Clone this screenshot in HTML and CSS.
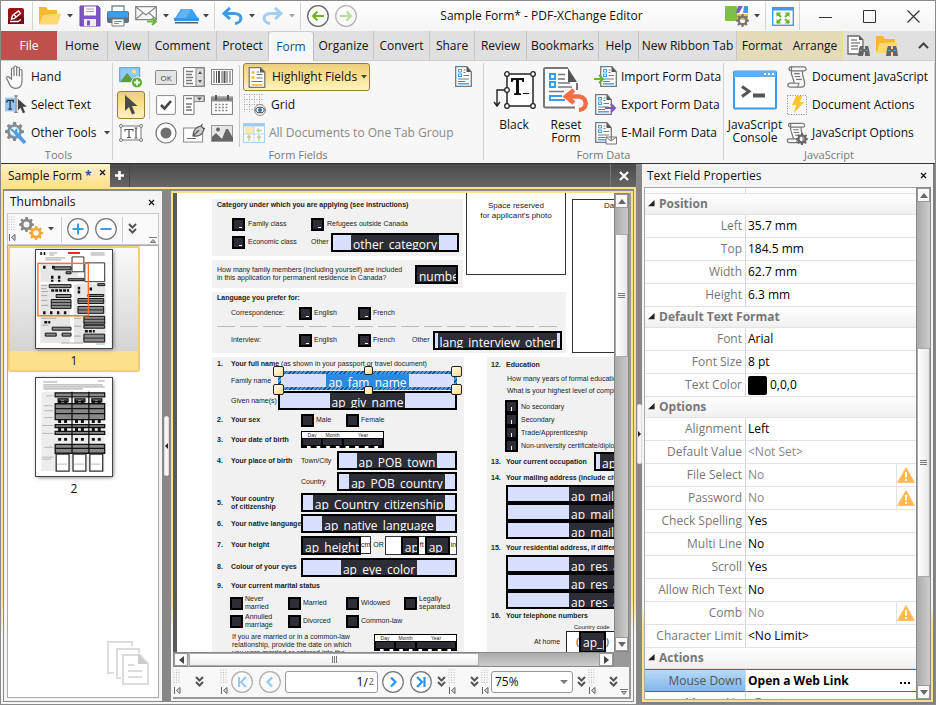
FILE: index.html
```html
<!DOCTYPE html>
<html lang="en">
<head>
<meta charset="utf-8">
<title>Sample Form* - PDF-XChange Editor</title>
<link rel="stylesheet" href="styles.css">
</head>
<body>
<svg class="sprite" aria-hidden="true">
  <symbol id="i-down" viewBox="0 0 6 4"><path d="M0 0h6L3 3.500z" fill="currentColor"/></symbol>
  <symbol id="i-chev2" viewBox="0 0 9 12"><path d="M1 1l3.500 3.500L8 1M1 6l3.500 3.500L8 6" fill="none" stroke="#555" stroke-width="2"/></symbol>
  <symbol id="i-grip" viewBox="0 0 8 26"><path d="M1 .5v15M3.500 .5v15M6 .5v15" stroke="#bbb" stroke-dasharray="1 1.500" fill="none"/><path d="M1.500 18v7M7 18.500v6L3.500 21.500z" stroke="#666" fill="#ddd" stroke-width="1"/></symbol>
  <symbol id="i-x" viewBox="0 0 7 7"><path d="M1 1l5 5M6 1l-5 5" stroke="currentColor" stroke-width="1.200"/></symbol>
  <symbol id="i-gear" viewBox="0 0 20 20"><path d="M10 0l1.700.1.500 2.700 1.900.8L16.500 2.200l1.900 2-1.500 2.300.7 1.800 2.400.7v2.400l-2.600.8-.8 1.800 1.400 2.300-1.900 1.900-2.300-1.500-1.800.7L11.400 20H8.600L8 17.400l-1.800-.7-2.400 1.500-1.900-1.900 1.500-2.400-.8-1.800L0 11.400V8.800l2.600-.7.800-1.800L1.900 4l1.900-1.900 2.400 1.400L8 2.800 8.500 0zM10 6a4 4 0 100 8 4 4 0 000-8z" fill="currentColor" fill-rule="evenodd"/></symbol>
  <symbol id="i-page" viewBox="0 0 17 21"><path d="M.7.7H12L16.300 6v14.300H.7z" fill="#fff" stroke="#777" stroke-width="1.300"/><path d="M11.500.7v5.300h4.800z" fill="#555"/><rect x="3.500" y="3.500" width="3" height="2.500" fill="none" stroke="#3f9fee"/><rect x="3.500" y="8" width="3" height="2.500" fill="none" stroke="#3f9fee"/><path d="M8.500 4h2M8.500 6.500h2M8.500 9.500H14M3 13h11M3 15.500h7" stroke="#777"/><path d="M3 17.800h11" stroke="#3f9fee" stroke-width="1.400"/></symbol>
  <symbol id="i-scroll" viewBox="0 0 22 23"><path d="M4.500 1H18c3 0 3.500 4 .5 4H17c-1.500 4 2 9 2 13 0 3-1.500 4-3 4H4c-3.500 0-3.500-4 0-4h4c0-4-3.500-8-3-13C5 2.500 6 1 4.500 1 2 1 2 5 5 5h12" fill="#f7f7f7" stroke="#777" stroke-width="1.300"/><path d="M8 8h6M8.500 11h6M10 14h6M8 18h5c0 2-1 3-2 4" stroke="#777" fill="none" stroke-width="1.200"/></symbol>
  <symbol id="i-warn" viewBox="0 0 18 16"><path d="M9 .5L17.500 15.500H.5z" fill="#ffb84d" stroke="#ffc46b" stroke-linejoin="round"/><path d="M9 5v5.500M9 12v2" stroke="#fff" stroke-width="2"/></symbol>
  <symbol id="i-bino" viewBox="0 0 12 12"><path d="M1 4l1-3h3v3h2V1h3l1 3 1 7H7V7H5v4H0z" fill="#666"/><path d="M2 5.500h2.500M7.500 5.500H10" stroke="#5a9fd8"/></symbol>
  <symbol id="i-open" viewBox="0 0 8 8"><path d="M7.500 0v7H0z" fill="#222"/></symbol>
</svg>

<div class="app">
  <header class="titlebar">
    <div class="brand"><svg width="16" height="16" viewBox="0 0 16 16"><rect width="16" height="16" rx="2" fill="#9c1018"/><path d="M0 13Q9 3 16 10v6H0z" fill="#700a10"/><path d="M3.500 11l1-3.500 6-4.500 2 2.500-6 4.800zM6 6.500l2 2.500M2 13.500h8l3-2" fill="none" stroke="#fff" stroke-width="1.300"/></svg></div>
    <i class="sep"></i>
    <button class="tb" aria-label="Open"><svg width="24" height="20" viewBox="0 0 24 20"><path d="M1 18V1h7l2 3h9v14z" fill="#f6b733"/><path d="M1 18.500L5 9l18-1.500-3 11z" fill="#ffd773"/></svg></button>
    <button class="dd" aria-label="Open menu"><svg><use href="#i-down"/></svg></button>
    <button class="tb" aria-label="Save"><svg width="22" height="22" viewBox="0 0 22 22"><path d="M1 1h18l2 2v18H1z" fill="#7e57c2" stroke="#6b46ad"/><rect x="5" y="1.500" width="12" height="9" fill="#fff"/><path d="M7 4h8M7 6.500h8" stroke="#a9a"/><rect x="5" y="14" width="12" height="7" fill="#eee"/><rect x="8" y="15.500" width="3" height="5" fill="#7e57c2"/></svg></button>
    <button class="tb" aria-label="Print"><svg width="22" height="22" viewBox="0 0 22 22"><path d="M5 7V1h12v6" fill="#fff" stroke="#888" stroke-width="1.400"/><rect x="0" y="6" width="22" height="12" rx="2" fill="#607080"/><rect x="1" y="6.500" width="20" height="6" fill="#3aa0f0"/><path d="M5 14h12v7H5z" fill="#fff" stroke="#777"/><path d="M7 16.500h8M7 18.500h5" stroke="#3aa0f0"/></svg></button>
    <button class="tb" aria-label="Mail"><svg width="22" height="20" viewBox="0 0 22 20"><path d="M.7.700h20.600v13H.7z" fill="#fafafa" stroke="#888" stroke-width="1.300"/><path d="M1 1l10 8L21 1M1 13l7-6M21 13l-7-6" fill="none" stroke="#888" stroke-width="1.200"/><path d="M12 15.500h8M17 12l4 3.500-4 3.500" fill="none" stroke="#70b33d" stroke-width="2.200"/></svg></button>
    <button class="dd" aria-label="Mail menu"><svg><use href="#i-down"/></svg></button>
    <button class="tb" aria-label="Scan"><svg width="25" height="16" viewBox="0 0 25 16"><path d="M7 1h11l6 9H1z" fill="#3fa0f0"/><path d="M9 1h8l-5 9H2z" fill="#61b4f8"/><path d="M0 10h25v3H0z" fill="#3a95e6"/><path d="M1 14h23v1.500H1z" fill="#555e66"/></svg></button>
    <button class="dd" aria-label="Scan menu"><svg><use href="#i-down"/></svg></button>
    <i class="sep"></i>
    <button class="tb" aria-label="Undo"><svg width="21" height="18" viewBox="0 0 21 18"><path d="M8 1L2 6.500l6 5.500M3 6.500h9c10 0 8 9.500 1 10" fill="none" stroke="#3d9be9" stroke-width="3"/></svg></button>
    <button class="dd" aria-label="Undo menu"><svg><use href="#i-down"/></svg></button>
    <button class="tb faded" aria-label="Redo"><svg width="21" height="18" viewBox="0 0 21 18"><path d="M13 1l6 5.500-6 5.500M18 6.500H9c-10 0-8 9.500-1 10" fill="none" stroke="#3d9be9" stroke-width="3"/></svg></button>
    <button class="dd faded" aria-label="Redo menu"><svg><use href="#i-down"/></svg></button>
    <i class="sep"></i>
    <button class="tb" aria-label="Previous view"><svg width="22" height="22" viewBox="0 0 22 22"><circle cx="11" cy="11" r="10.300" fill="#fff" stroke="#666" stroke-width="1.300"/><path d="M17 11H7M10.500 6.500L6 11l4.500 4.500" fill="none" stroke="#6bb52c" stroke-width="2"/></svg></button>
    <button class="tb faded" aria-label="Next view"><svg width="22" height="22" viewBox="0 0 22 22"><circle cx="11" cy="11" r="10.300" fill="#fff" stroke="#666" stroke-width="1.300"/><path d="M5 11h10M11.500 6.500L16 11l-4.500 4.500" fill="none" stroke="#6bb52c" stroke-width="2"/></svg></button>
    <h1 class="title">Sample Form* - PDF-XChange Editor</h1>
    <button class="tb" aria-label="UI options"><svg width="25" height="21" viewBox="0 0 25 21"><rect x="0" y="0" width="12" height="15" rx="1" fill="#7cc04a"/><path d="M13 0h5l-4 7h-3z" fill="#7e57c2"/><path d="M19 0h4v7h-5z" fill="#3d9be9"/><path d="M12 8h11v6H12z" fill="#f7c35a"/><svg x="11" y="8" width="13" height="13" color="#777"><use href="#i-gear"/></svg></svg></button>
    <button class="dd" aria-label="UI options menu"><svg><use href="#i-down"/></svg></button>
    <i class="sep"></i>
    <button class="tb" aria-label="Full screen"><svg width="22" height="19" viewBox="0 0 22 19"><rect x=".7" y=".7" width="20.600" height="17.600" fill="#fff" stroke="#3d9be9" stroke-width="1.400"/><path d="M1 2h20" stroke="#3d9be9" stroke-width="3"/><path d="M4.500 5.500h5l-5 4.500zM17.500 5.500h-5l5 4.500zM4.500 16.500h5l-5-4.500zM17.500 16.500h-5l5-4.500z" fill="#6bb52c"/><path d="M5 6l4 4M17 6l-4 4M5 16l4-4M17 16l-4-4" stroke="#6bb52c" stroke-width="2"/></svg></button>
    <i class="sep"></i>
    <button class="win" aria-label="Minimize"><svg width="13" height="13"><path d="M0 7.500h13" stroke="#333"/></svg></button>
    <button class="win" aria-label="Maximize"><svg width="13" height="13"><path d="M.5.500h12v12H.5z" fill="none" stroke="#333"/></svg></button>
    <button class="win" aria-label="Close"><svg width="13" height="13"><path d="M.5.500l12 12M12.500.500l-12 12" stroke="#333" stroke-width="1.200"/></svg></button>
  </header>

  <nav class="tabs">
    <button class="file">File</button>
    <button>Home</button>
    <button>View</button>
    <button>Comment</button>
    <button>Protect</button>
    <button class="current">Form</button>
    <button>Organize</button>
    <button>Convert</button>
    <button>Share</button>
    <button>Review</button>
    <button>Bookmarks</button>
    <button>Help</button>
    <button>New Ribbon Tab</button>
    <button class="context">Format</button>
    <button class="context">Arrange</button>
    <span class="tabtools">
      <button aria-label="Find"><svg width="24" height="24" viewBox="0 0 24 24"><path d="M1 2h11l4 4v14H1z" fill="#fff" stroke="#666" stroke-width="1.300"/><path d="M12 2v4h4z" fill="#555"/><path d="M4 6h6M4 9h9M4 12h7M4 15h7" stroke="#888" stroke-width="1.300"/><svg x="11" y="11" width="12" height="12"><use href="#i-bino"/></svg></svg></button>
      <button aria-label="Search"><svg width="24" height="24" viewBox="0 0 24 24"><path d="M1 18V2h7l2 3h10v13z" fill="#f6b733"/><path d="M1 19l4-10 18-1-3 11z" fill="#ffd773"/><svg x="11" y="11" width="12" height="12"><use href="#i-bino"/></svg></svg></button>
      <button class="fold" aria-label="Collapse ribbon"><svg width="11" height="7"><path d="M1 6l4.500-4.500L10 6" fill="none" stroke="#444" stroke-width="2"/></svg></button>
    </span>
  </nav>

  <div class="ribbon">
    <section class="group g-tools">
      <div class="cmds">
        <button class="cmd"><svg width="20" height="24" viewBox="0 0 20 24"><path d="M5.500 14V4.500c0-2 2.500-2 2.500 0V11 2.500c0-2 2.700-2 2.700 0V11 3.500c0-2 2.700-2 2.700 0V11.500 6c0-2 2.600-2 2.600 0v10c0 5-2.500 7.300-6.500 7.300-4 0-5.500-2.300-6.500-5L.8 13.500c-.5-2 1.700-2.500 2.500-1z" fill="#fff" stroke="#777" stroke-width="1.200"/></svg>Hand</button>
        <button class="cmd"><svg width="22" height="20" viewBox="0 0 24 22"><rect x="0" y="3" width="11" height="15" fill="#8fc6f5"/><path d="M2 6h7v2.500M5.500 6v9.500M3.500 15.500h4M2 6v2.500" stroke="#333" stroke-width="1.400" fill="none"/><path d="M10 1h4M12 1v18M10 19h4" stroke="#555"/><path d="M14 4v13l3-3 2.500 6 2.500-1-2.500-6H24z" fill="#444"/></svg>Select Text</button>
        <button class="cmd"><svg width="22" height="23" viewBox="0 0 22 23"><svg width="19" height="19" color="#888"><use href="#i-gear"/></svg><circle cx="9.500" cy="9.500" r="5" fill="#eef6fd" stroke="#5aa9ea"/><path d="M10 10l10 11" stroke="#4a9de6" stroke-width="3.500"/><path d="M6 7l4 3.500L12 7" fill="none" stroke="#4a9de6" stroke-width="2"/></svg>Other Tools<svg class="arr"><use href="#i-down"/></svg></button>
      </div>
      <h2>Tools</h2>
    </section>

    <section class="group g-fields">
      <div class="cmds fields">
        <div class="iconcol">
          <button aria-label="Image"><svg width="24" height="24" viewBox="0 0 24 24"><rect x=".7" y="2.700" width="20" height="14" fill="#8ecbf7" stroke="#5f9dc8"/><path d="M1 17L8 8l5 6 3-3 5 6z" fill="#5e9c3f"/><circle cx="15" cy="6.500" r="2" fill="#ffe27a"/><circle cx="18" cy="17.500" r="5.500" fill="#5cb030" stroke="#fff"/><path d="M18 14.500v6M15 17.500h6" stroke="#fff" stroke-width="1.800"/></svg></button>
          <button class="on" aria-label="Edit Form"><svg width="14" height="20" viewBox="0 0 14 20"><path d="M1 0v16l4-4 3 7.500 3-1.200-3-7.300h5.500z" fill="#4a4a4a"/></svg></button>
          <button aria-label="Text Field"><svg width="24" height="18" viewBox="0 0 24 18"><rect x="2" y="2" width="20" height="14" fill="#fff" stroke="#777"/><path d="M6 5.500h8M6 5v2.500M14 5v2.500M10 5v8.500M8 13.500h4M17 4v10M15.500 4h3M15.500 14h3" stroke="#555" fill="none" stroke-width="1.200"/><g fill="#fff" stroke="#777"><circle cx="2" cy="2" r="1.500"/><circle cx="22" cy="2" r="1.500"/><circle cx="2" cy="16" r="1.500"/><circle cx="22" cy="16" r="1.500"/></g></svg></button>
        </div>
        <i class="vline short"></i>
        <div class="icongrid">
          <button aria-label="Button"><svg width="22" height="15" viewBox="0 0 22 15"><rect x=".5" y=".5" width="21" height="14" rx="1" fill="#e4e4e4" stroke="#888"/><text x="11" y="11" class="oktext">OK</text></svg></button>
          <button aria-label="List Box"><svg width="22" height="20" viewBox="0 0 22 20"><rect x=".6" y=".6" width="20.800" height="18.800" fill="#fff" stroke="#777"/><path d="M13 1h8v18h-8z" fill="#ddd" stroke="#888"/><path d="M3 4.500h7M3 7.500h6M3 10.500h7M3 13.500h6M3 16.500h7" stroke="#777" stroke-width="1.400"/><path d="M15 7l2-3 2 3zM15 13l2 3 2-3z" fill="#555"/></svg></button>
          <button aria-label="Barcode"><svg width="22" height="16" viewBox="0 0 22 16"><rect x=".5" y=".5" width="21" height="15" fill="#fff" stroke="#888"/><path d="M3 2v12M5.500 2v12M11 2v12M16 2v12M19 2v12" stroke="#555"/><path d="M8 2v12M13.500 2v12" stroke="#555" stroke-width="2"/></svg></button>
          <button aria-label="Check Box"><svg width="20" height="20" viewBox="0 0 20 20"><rect x=".6" y=".6" width="18.800" height="18.800" rx="1" fill="#fff" stroke="#888"/><path d="M5 10l3.500 3.500L15 6" fill="none" stroke="#444" stroke-width="2.600"/></svg></button>
          <button aria-label="Dropdown"><svg width="22" height="20" viewBox="0 0 22 20"><path d="M.6.600h20.800v6H11v12.800H.6z" fill="#fff" stroke="#777"/><path d="M11 1h10v5.500H11z" fill="#ddd" stroke="#888"/><path d="M3 3.500h6M3 9h6M3 12h5M3 15h6" stroke="#777" stroke-width="1.300"/><path d="M14 2.500h5l-2.500 3z" fill="#555"/></svg></button>
          <button aria-label="Date"><svg width="22" height="20" viewBox="0 0 22 20"><rect x=".6" y="2" width="20.800" height="17.400" fill="#fff" stroke="#777"/><path d="M1 4.500h20" stroke="#888" stroke-width="4"/><path d="M5 0v5M17 0v5" stroke="#555" stroke-width="2"/><path d="M4 9.500h14M4 12.500h14M4 15.500h14" stroke="#888" stroke-width="1.600" stroke-dasharray="2 1.500"/></svg></button>
          <button aria-label="Radio Button"><svg width="22" height="22" viewBox="0 0 22 22"><circle cx="11" cy="11" r="10" fill="#fff" stroke="#777" stroke-width="1.200"/><circle cx="11" cy="11" r="5.500" fill="#707070"/></svg></button>
          <button aria-label="Signature"><svg width="22" height="20" viewBox="0 0 22 20"><rect x=".6" y="5" width="19" height="14" fill="#fff" stroke="#888"/><path d="M4 15.500h9" stroke="#666"/><path d="M10 13c0-6 3-9 8-10l3 3c-1 5-4 8-11 7zM10 13l6-6M18 3l1.500-2M21 6l1-1" fill="#ccc" stroke="#555" stroke-width="1.200"/></svg></button>
          <button aria-label="Image Field"><svg width="22" height="17" viewBox="0 0 22 17"><rect x=".5" y=".5" width="21" height="16" fill="#e6e6e6" stroke="#999"/><path d="M1 16V12l4-4 6 6 4-10h2l5 9v3z" fill="#666"/><circle cx="7" cy="4.500" r="2" fill="#666"/></svg></button>
        </div>
        <i class="vline"></i>
        <div class="cmdcol">
          <button class="cmd hot"><svg width="17" height="21" viewBox="0 0 17 21"><path d="M.7.700H12L16.300 5v15.300H.7z" fill="#fff" stroke="#777" stroke-width="1.300"/><path d="M11.500.7V5.500h4.800z" fill="#555"/><path d="M3 4h3v3H3zM3 9h3v3H3zM3 17h11v2H3z" fill="#ffc845"/><path d="M8 5h2.500M8 7.500h6M8 11h6M3 14.500h11" stroke="#777"/></svg>Highlight Fields<svg class="arr"><use href="#i-down"/></svg></button>
          <button class="cmd"><svg width="24" height="24" viewBox="0 0 24 24"><path d="M1 1.500h19M1 6.500h19M1 11.500h19M1 16.500h10M1.500 1v18M6.500 1v18M11.500 1v12M16.500 1v10" stroke="#999" stroke-dasharray="1 1.500"/><circle cx="17" cy="17" r="5.500" fill="#fff" stroke="#888"/><ellipse cx="17" cy="17" rx="4.200" ry="2.800" fill="#fff" stroke="#333"/><circle cx="17" cy="17" r="2" fill="#2a75b5"/></svg>Grid</button>
          <button class="cmd off" disabled><svg width="22" height="20" viewBox="0 0 22 20"><rect x=".6" y=".6" width="20.800" height="18.800" fill="#fff" stroke="#9fcdf2"/><path d="M1 2h20" stroke="#9fcdf2" stroke-width="3"/><rect x="2" y="4" width="9" height="7" fill="#ffe9ae"/><path d="M11 4v15M1 11h20" stroke="#b6d8f0"/><path d="M14 7.500h5M16 5.500l-2 2 2 2M6 18v-5M4 14.500l2-2 2 2M16 18v-5M14 14.500l2-2 2 2" stroke="#b7d99c" fill="none" stroke-width="1.500"/></svg>All Documents to One Tab Group</button>
        </div>
        <button class="lonely" aria-label="Field list"><svg width="17" height="21"><use href="#i-page"/></svg></button>
      </div>
      <h2>Form Fields</h2>
    </section>

    <section class="group g-data">
      <div class="cmds row">
        <button class="big"><svg width="43" height="40" viewBox="0 0 43 40"><path d="M12 20H4v16M1 32l3 4 3-4" fill="none" stroke="#222" stroke-width="1.400"/><rect x="14" y="4" width="26" height="32" fill="#fff" stroke="#222" stroke-width="1.500"/><path d="M18 8h13v4h-1.500l-1-2H26v13l2 .5V25h-7v-1.500l2-.5V10h-2.500l-1 2H18z" fill="#111"/><path d="M30 23.500h6" stroke="#111"/><g fill="#fff" stroke="#222" stroke-width="1.300"><circle cx="14" cy="4" r="2.300"/><circle cx="40" cy="4" r="2.300"/><circle cx="14" cy="20" r="2.300"/><circle cx="14" cy="36" r="2.300"/><circle cx="40" cy="36" r="2.300"/></g></svg><span>Black</span></button>
        <button class="big"><svg width="46" height="46" viewBox="0 0 46 46"><path d="M2 1h24l9 14v26H2z" fill="#fff"/><path d="M32 40.500H2.500a1.500 1.500 0 01-1.500-1.500V2.500A1.500 1.500 0 012.500 1H25M34 16v7" fill="none" stroke="#777" stroke-width="2"/><path d="M25 1v14h9z" fill="#555"/><path d="M7 7h5v5H7zM7 15h5v5H7zM22 33H7v-4h12" fill="none" stroke="#3d9be9" stroke-width="2"/><path d="M15 7.500h7M15 12h7M15 16h12M15 20h14M6 24.500h15" stroke="#777" stroke-width="1.700"/><path d="M31 23l-8 6.500 8 6.500M24 29.500h12c9 1 9 13 0 13.500" fill="none" stroke="#f86d43" stroke-width="4.500"/></svg><span>Reset<br>Form</span></button>
        <div class="cmdcol">
          <button class="cmd"><svg width="23" height="22" viewBox="0 0 23 22"><svg x="6" y="0" width="17" height="21"><use href="#i-page"/></svg><path d="M0 13h8M5 9l4 4-4 4" fill="none" stroke="#6bb52c" stroke-width="2"/></svg>Import Form Data</button>
          <button class="cmd"><svg width="23" height="22" viewBox="0 0 23 22"><svg x="1" y="0" width="17" height="21"><use href="#i-page"/></svg><path d="M11 14h9M17 10l4 4-4 4" fill="none" stroke="#7e57c2" stroke-width="2"/></svg>Export Form Data</button>
          <button class="cmd"><svg width="23" height="23" viewBox="0 0 23 23"><svg x="1" y="0" width="17" height="21"><use href="#i-page"/></svg><path d="M12 15h10.500v7H12zM12 15l5 4 5.500-4" fill="#fff" stroke="#777"/></svg>E-Mail Form Data</button>
        </div>
      </div>
      <h2>Form Data</h2>
    </section>

    <section class="group g-js">
      <div class="cmds row">
        <button class="big console"><svg width="44" height="39" viewBox="0 0 44 39"><rect x="1" y="1" width="42" height="37" rx="1" fill="#fff" stroke="#3d9be9" stroke-width="2"/><path d="M1 3.500h42" stroke="#62b0f2" stroke-width="6"/><path d="M31 3.500h10" stroke="#fff" stroke-width="2" stroke-dasharray="2 2"/><path d="M9 16l7 5-7 5" fill="none" stroke="#555" stroke-width="3"/><path d="M20 25h12" stroke="#555" stroke-width="4"/></svg><span>JavaScript<br>Console</span></button>
        <div class="cmdcol">
          <button class="cmd"><svg width="20" height="22"><use href="#i-scroll"/></svg>Document JavaScript</button>
          <button class="cmd"><svg width="20" height="22" viewBox="0 0 20 22"><path d="M.5 1.500h19v19H.5z" fill="none" stroke="#888" stroke-dasharray="1 1.500"/><path d="M9 2h6l-2 6h4L7 19l2-8H5z" fill="#ffc42e"/></svg>Document Actions</button>
          <button class="cmd"><svg width="22" height="23" viewBox="0 0 22 23"><svg width="20" height="22"><use href="#i-scroll"/></svg><svg x="10" y="11" width="12" height="12" color="#666"><use href="#i-gear"/></svg></svg>JavaScript Options</button>
        </div>
      </div>
      <h2>JavaScript</h2>
    </section>
  </div>

  <main class="desk">
    <div class="left">
      <div class="doctabs">
        <button class="doctab">Sample Form <b>*</b><svg width="7" height="7"><use href="#i-x"/></svg></button>
        <button class="plus" aria-label="New document"><svg width="9" height="9"><path d="M4.500 0v9M0 4.500h9" stroke="#fff" stroke-width="2.600"/></svg></button>
        <button class="shut" aria-label="Close all"><svg width="10" height="10"><path d="M1 1l8 8M9 1l-8 8" stroke="#fff" stroke-width="2.200"/></svg></button>
      </div>
      <div class="frame">
        <aside class="thumbs">
          <header><h2>Thumbnails</h2><button aria-label="Close pane"><svg width="7" height="7"><use href="#i-x"/></svg></button></header>
          <div class="thumbbar">
            <svg class="grip"><use href="#i-grip"/></svg>
            <button aria-label="Options"><svg width="24" height="24" viewBox="0 0 24 24"><svg width="15" height="15" color="#888"><use href="#i-gear"/></svg><svg x="10" y="9" width="14" height="14" color="#f5a938"><use href="#i-gear"/></svg></svg></button>
            <svg class="arr"><use href="#i-down"/></svg>
            <i></i>
            <button aria-label="Zoom in"><svg width="22" height="22" viewBox="0 0 22 22"><circle cx="11" cy="11" r="10.300" fill="#fff" stroke="#777" stroke-width="1.200"/><path d="M11 5.500v11M5.500 11h11" stroke="#3d9be9" stroke-width="2"/></svg></button>
            <button aria-label="Zoom out"><svg width="22" height="22" viewBox="0 0 22 22"><circle cx="11" cy="11" r="10.300" fill="#fff" stroke="#777" stroke-width="1.200"/><path d="M5.500 11h11" stroke="#3d9be9" stroke-width="2"/></svg></button>
            <i></i>
            <button class="more" aria-label="More"><svg width="9" height="12"><use href="#i-chev2"/></svg></button>
            <svg class="endmark" width="8" height="6"><path d="M0 .5h8M1.500 5.500L4 2.500l2.500 3z" stroke="#777" fill="#bbb"/></svg>
          </div>
          <div class="thumblist">
            <figure class="picked">
              <svg width="76" height="98" viewBox="0 0 76 99"><rect width="76" height="99" fill="#fff"/>
                <path d="M4 14h38v13H4zM4 27h66v5H4zM4 34h30v60H4zM38 34h32v60H38z" fill="#e6e6e6"/>
                <path d="M4 4h5M13 3h8M13 5h5M55 3h14M55 5h14M9 8h20M9 10h16" stroke="#888" stroke-width=".8"/>
                <path d="M4 2h1.500v3H4zM7.500 2H9v3H7.500z" fill="#111"/><path d="M32 2h12v2H32z" fill="#e22"/>
                <path d="M36 7h12v15H36zM49 13h20v19H49z" fill="#fff" stroke="#333"/>
                <path d="M18 17h17v3H18zM30 22h5v2h-5zM32 29h16v2H32zM13 35h22v3H13zM20 45h15v3H20zM15 50h20v9H15zM42 49h26v5H42zM42 57h26v7H42zM52 45h16v2H52zM48 67h21v8H48zM48 76h21v3H48zM48 85h21v8H48zM16 78h19v3H16zM9 84h11v3H9zM26 84h9v3h-9zM62 34h7v2h-7z" fill="#8c8c8c" stroke="#111" stroke-width="1"/>
                <path d="M15 53h20M15 56h20M42 51.500h26M42 60.500h26M48 70h21M48 73h21M48 89h21" stroke="#111" stroke-width=".8"/>
                <path d="M8 16v3M17 16v3M16 26v6M23 26v6M15 41h18M43 37v8M55 38v4M8 62v3M15 62v3M22 62v3M29 62v3M8 73h6M49 82h10" stroke="#111" stroke-width="2.500" stroke-dasharray="3 1"/>
                <path d="M5 36h6M5 39h5M5 42h7M5 46h6M5 51h6M5 56h7M5 69h15M5 76h7M38 69h7M38 77h7M38 87h7M25 94h22M60 95h9" stroke="#999" stroke-width=".8"/>
                <rect x="1.500" y="13.500" width="51" height="53" fill="none" stroke="#ff6f2c" stroke-width="1.400"/></svg>
              <figcaption>1</figcaption>
            </figure>
            <figure>
              <svg width="76" height="98" viewBox="0 0 76 99"><rect width="76" height="99" fill="#fff"/>
                <path d="M5 14h64v80H5z" fill="#ededed"/>
                <path d="M7 4h14M62 3h7M7 7h60M7 9h62M7 11h40" stroke="#888" stroke-width=".8"/>
                <path d="M19 15h50v4H19zM19 26h50v16H19zM19 47h50v3H19zM19 54h50v3H19zM19 67h50v9H19zM22 21h10v3H22zM39 21h10v3H39zM56 21h10v3H56z" fill="#888" stroke="#111" stroke-width="1.300"/>
                <path d="M19 31h50M19 36h50M19 71h50M36 14v62M53 14v62" stroke="#111" stroke-width="1.300"/>
                <path d="M22 44h46M22 52h46M22 62h46M22 24h46" stroke="#111" stroke-width="3" stroke-dasharray="3 3 3 8"/>
                <path d="M20 77h13v17H20zM37 77h13v17H37zM54 77h13v17H54z" fill="#fff" stroke="#333" stroke-width="1.300"/>
                <path d="M10 18h7M8 28h9M8 33h9M8 40h9M6 48h11M6 56h11M8 70h9M6 80h11M6 82h9M21 87h10M38 87h10M55 87h10" stroke="#aaa" stroke-width=".8"/></svg>
              <figcaption>2</figcaption>
            </figure>
            <svg class="watermark" width="44" height="46" viewBox="0 0 44 46"><g fill="#fff" stroke="#dcdcdc" stroke-width="2"><path d="M8 32H2V1h24v4M15 37h-4V8h22v4"/><path d="M17 14h17l8 9v20H17z"/></g><path d="M32 13v10h10z" fill="#ccc"/><path d="M22 24h6M22 30h14M22 36h14" stroke="#dcdcdc" stroke-width="2"/></svg>
          </div>
        </aside>
        <div class="splitter"><b class="back"></b></div>

        <section class="docs">
          <div class="viewport">
            <div class="sheet">
              <div class="upper">
                <div class="upmain">
                  <div class="card cat">
                    <h3>Category under which you are applying (see instructions)</h3>
                    <div class="line opts1"><i class="chk"></i><span>Family class</span><i class="chk"></i><span>Refugees outside Canada</span></div>
                    <div class="line opts1"><i class="chk"></i><span>Economic class</span><span class="oth">Other</span><div class="field grow"><span>other_category</span></div></div>
                  </div>
                  <div class="card fam"><p>How many family members (including yourself) are included<br>in this application for permanent residence in Canada?</p><div class="field full num"><span>number</span></div></div>
                  <div class="photo">Space reserved<br>for applicant's photo</div>
                  <div class="card lang">
                    <h3>Language you prefer for:</h3>
                    <div class="line opts2"><span>Correspondence:</span><i class="chk"></i><span>English</span><i class="chk"></i><span>French</span></div>
                    <div class="dash"></div>
                    <div class="line opts2"><span>Interview:</span><i class="chk"></i><span>English</span><i class="chk"></i><span>French</span><span>Other</span><div class="field grow"><span>lang_interview_other</span></div></div>
                  </div>
                </div>
                <div class="official">Date</div>
              </div>

              <div class="lower">
                <div class="card person">
                  <div class="q first"><b>1.</b><span><b>Your full name</b> (as shown in your passport or travel document)</span></div>
                  <div class="q family"><i></i><span class="w47">Family name</span>
                    <div class="picked-field"><div class="field blue"><span>ap_fam_name</span></div><i class="knob tl"></i><i class="knob tr"></i><i class="knob bl"></i><i class="knob br"></i><i class="knob tm"></i><i class="knob bm"></i></div></div>
                  <div class="q"><i></i><span class="w47">Given name(s)</span><div class="field grow"><span>ap_giv_name</span></div></div>
                  <div class="q sex"><b>2.</b><b class="w70">Your sex</b><i class="chk"></i><span class="w30">Male</span><i class="chk"></i><span>Female</span></div>
                  <div class="q"><b>3.</b><b class="w70">Your date of birth</b><div class="date"><span>Day</span><span>Month</span><span>Year</span><i></i><i></i><i></i></div></div>
                  <div class="q"><b>4.</b><b class="w70">Your place of birth</b><span class="w36">Town/City</span><div class="field grow"><span>ap_POB_town</span></div></div>
                  <div class="q"><i></i><i class="w70"></i><span class="w36">Country</span><div class="field grow"><span>ap_POB_country</span></div></div>
                  <div class="q"><b>5.</b><b class="w70">Your country<br>of citizenship</b><div class="field grow"><span>ap_Country_citizenship</span></div></div>
                  <div class="q"><b>6.</b><b class="w70">Your native language</b><div class="field grow"><span>ap_native_language</span></div></div>
                  <div class="q tall"><b>7.</b><b class="w70">Your height</b><div class="field full cmf"><span>ap_height</span></div><span class="unit">cm</span><span>&nbsp;OR</span><div class="feet"><div class="field full"><span>ap</span></div><span>ft</span><div class="field full wide"><span>ap_l</span></div><span>in</span></div></div>
                  <div class="q tall"><b>8.</b><b class="w70">Colour of your eyes</b><div class="field grow"><span>ap_eye_color</span></div></div>
                  <div class="q short"><b>9.</b><b>Your current marital status</b></div>
                  <div class="marital">
                    <i class="chk"></i><span>Never<br>married</span><i class="chk"></i><span>Married</span><i class="chk"></i><span>Widowed</span><i class="chk"></i><span>Legally<br>separated</span>
                    <i class="chk"></i><span>Annulled<br>marriage</span><i class="chk"></i><span>Divorced</span><i class="chk"></i><span>Common-law</span>
                  </div>
                  <div class="union"><p>If you are married or in a common-law<br>relationship, provide the date on which<br>you were married or entered into the</p><div class="date"><span>Day</span><span>Month</span><span>Year</span><i></i><i></i><i></i></div></div>
                </div>

                <div class="card study">
                  <div class="q title12"><b>12.</b><b>Education</b></div>
                  <p>How many years of formal education do you have?</p>
                  <p>What is your highest level of completed education?</p>
                  <div class="levels">
                    <i class="chk"></i><span>No secondary</span>
                    <i class="chk"></i><span>Secondary</span>
                    <i class="chk"></i><span>Trade/Apprenticeship</span>
                    <i class="chk"></i><span>Non-university certificate/diploma</span>
                  </div>
                  <div class="q family"><b>13.</b><b class="w88">Your current occupation</b><div class="field occ"><span>ap_occupation</span></div></div>
                  <div class="q short"><b>14.</b><b>Your mailing address (include city, province)</b></div>
                  <div class="stack"><div class="field"><span>ap_mail_address</span></div><div class="field"><span>ap_mail_address</span></div><div class="field"><span>ap_mail_address</span></div></div>
                  <div class="q short gap"><b>15.</b><b>Your residential address, if different</b></div>
                  <div class="stack"><div class="field"><span>ap_res_address</span></div><div class="field"><span>ap_res_address</span></div><div class="field"><span>ap_res_address</span></div></div>
                  <div class="q short"><b>16.</b><b>Your telephone numbers</b></div>
                  <div class="cc">Country code</div>
                  <div class="home"><span>At home</span><div class="phone">(<div class="field full"><span>ap_ph</span></div>)</div></div>
                </div>
              </div>
            </div>
          </div>
          <div class="vbar" aria-hidden="true"><span class="end"><svg width="8" height="5"><path d="M0 5h8L4 0z" fill="#666"/></svg></span><span class="thumb"><em></em></span><span class="end"><svg width="8" height="5"><path d="M0 0h8L4 5z" fill="#666"/></svg></span></div>
          <div class="hbar" aria-hidden="true"><span class="end"><svg width="5" height="8"><path d="M5 0v8L0 4z" fill="#444"/></svg></span><span class="thumb"><em></em></span><span class="end"><svg width="5" height="8"><path d="M0 0v8l5-4z" fill="#444"/></svg></span></div>
          <div class="status">
            <svg class="grip"><use href="#i-grip"/></svg>
            <button class="more m1" aria-label="More"><svg width="9" height="12"><use href="#i-chev2"/></svg></button>
            <svg class="grip m2"><use href="#i-grip"/></svg>
            <button class="nav faded" aria-label="First page"><svg width="22" height="22" viewBox="0 0 22 22"><circle cx="11" cy="11" r="10.300" fill="#fff" stroke="#555" stroke-width="1.200"/><path d="M8 6v10M15 6l-5 5 5 5" fill="none" stroke="#1f8fee" stroke-width="2"/></svg></button>
            <button class="nav faded" aria-label="Previous page"><svg width="22" height="22" viewBox="0 0 22 22"><circle cx="11" cy="11" r="10.300" fill="#fff" stroke="#555" stroke-width="1.200"/><path d="M13 6.500L8.500 11l4.500 4.500" fill="none" stroke="#1f8fee" stroke-width="2.200"/></svg></button>
            <label class="pageno"><input type="text" value="1" aria-label="Page"><span>/<small>2</small></span></label>
            <button class="nav" aria-label="Next page"><svg width="22" height="22" viewBox="0 0 22 22"><circle cx="11" cy="11" r="10.300" fill="#fff" stroke="#777" stroke-width="1.200"/><path d="M9 6.500l4.500 4.500L9 15.500" fill="none" stroke="#2b95ee" stroke-width="2.200"/></svg></button>
            <button class="nav" aria-label="Last page"><svg width="22" height="22" viewBox="0 0 22 22"><circle cx="11" cy="11" r="10.300" fill="#fff" stroke="#777" stroke-width="1.200"/><path d="M14.500 6v10M7 6l5 5-5 5" fill="none" stroke="#2b95ee" stroke-width="2.200"/></svg></button>
            <button class="more" aria-label="More"><svg width="9" height="12"><use href="#i-chev2"/></svg></button>
            <svg class="grip"><use href="#i-grip"/></svg>
            <button class="more m3" aria-label="More"><svg width="9" height="12"><use href="#i-chev2"/></svg></button>
            <svg class="grip"><use href="#i-grip"/></svg>
            <label class="zoom"><select aria-label="Zoom"><option>75%</option></select><svg width="8" height="4" viewBox="0 0 8 4"><path d="M0 0h8L4 4z" fill="#777"/></svg></label>
            <button class="more" aria-label="More"><svg width="9" height="12"><use href="#i-chev2"/></svg></button>
            <svg class="grip"><use href="#i-grip"/></svg>
            <button class="more m4" aria-label="More"><svg width="9" height="12"><use href="#i-chev2"/></svg></button>
            <svg class="endmark" width="8" height="6"><path d="M0 .5h8M1.500 2.500h5L4 5.500z" stroke="#777" fill="#bbb"/></svg>
          </div>
        </section>
      </div>
    </div>

    <div class="splitter right-split"><b class="fwd"></b></div>

    <aside class="props">
      <header><h2>Text Field Properties</h2><button aria-label="Close pane"><svg width="7" height="7"><use href="#i-x"/></svg></button></header>
      <div class="propbody">
        <div class="tablewrap">
          <table>
            <colgroup><col class="c-name"><col><col class="c-act"></colgroup>
            <tbody>
              <tr class="stub"><th></th><td colspan="2"></td></tr>
              <tr class="sec"><th colspan="3"><svg width="7" height="7"><use href="#i-open"/></svg>Position</th></tr>
              <tr><th>Left</th><td colspan="2">35.7 mm</td></tr>
              <tr><th>Top</th><td colspan="2">184.5 mm</td></tr>
              <tr><th>Width</th><td colspan="2">62.7 mm</td></tr>
              <tr><th>Height</th><td colspan="2">6.3 mm</td></tr>
              <tr class="sec"><th colspan="3"><svg width="7" height="7"><use href="#i-open"/></svg>Default Text Format</th></tr>
              <tr><th>Font</th><td colspan="2">Arial</td></tr>
              <tr><th>Font Size</th><td colspan="2">8 pt</td></tr>
              <tr><th>Text Color</th><td colspan="2"><i class="swatch"></i>0,0,0</td></tr>
              <tr class="sec"><th colspan="3"><svg width="7" height="7"><use href="#i-open"/></svg>Options</th></tr>
              <tr><th>Alignment</th><td colspan="2">Left</td></tr>
              <tr class="dim"><th>Default Value</th><td colspan="2">&lt;Not Set&gt;</td></tr>
              <tr class="dim"><th>File Select</th><td>No</td><td class="act"><svg width="18" height="16"><use href="#i-warn"/></svg></td></tr>
              <tr class="dim"><th>Password</th><td>No</td><td class="act"><svg width="18" height="16"><use href="#i-warn"/></svg></td></tr>
              <tr><th>Check Spelling</th><td colspan="2">Yes</td></tr>
              <tr><th>Multi Line</th><td colspan="2">No</td></tr>
              <tr><th>Scroll</th><td colspan="2">Yes</td></tr>
              <tr><th>Allow Rich Text</th><td colspan="2">No</td></tr>
              <tr class="dim"><th>Comb</th><td>No</td><td class="act"><svg width="18" height="16"><use href="#i-warn"/></svg></td></tr>
              <tr><th>Character Limit</th><td colspan="2">&lt;No Limit&gt;</td></tr>
              <tr class="sec"><th colspan="3"><svg width="7" height="7"><use href="#i-open"/></svg>Actions</th></tr>
              <tr class="sel"><th>Mouse Down</th><td>Open a Web Link</td><td class="act"><button aria-label="Edit action"><svg width="11" height="3"><path d="M0 0h2v2H0zM4 0h2v2H4zM8 0h2v2H8z"/></svg></button></td></tr>
              <tr class="dim"><th>Mouse Up</th><td colspan="2">&lt;Empty&gt;</td></tr>
            </tbody>
          </table>
        </div>
        <div class="vbar" aria-hidden="true"><span class="end"><svg width="8" height="5"><path d="M0 5h8L4 0z" fill="#666"/></svg></span><span class="thumb"><em></em></span><span class="end"><svg width="8" height="5"><path d="M0 0h8L4 5z" fill="#666"/></svg></span></div>
      </div>
    </aside>
  </main>
</div>
</body>
</html>
```
FILE: styles.css
```css
:root {
  --ink: #111;
}

* { box-sizing: border-box; }

body {
  margin: 0;
  font-family: "Open Sans", "Noto Sans", sans-serif;
  font-size: 12px;
  line-height: 16px;
  color: var(--ink);
}

h1, h2, h3, p, figure { margin: 0; font-weight: normal; font-size: inherit; }

button {
  margin: 0;
  padding: 0;
  border: 0;
  background: none;
  font: inherit;
  color: inherit;
}

svg { flex: none; display: block; }
.sprite { position: absolute; width: 0; height: 0; }
.faded { opacity: .45; }
.arr { width: 6px; height: 4px; color: #444; }
.grip { width: 8px; height: 26px; }

.app {
  display: flex;
  flex-direction: column;
  height: 100vh;
  border: 1px solid #8a8a8a;
  background: #f7f7f7;
  overflow: hidden;
}

/* Title bar */
.titlebar {
  display: flex;
  align-items: center;
  height: 30px;
  flex: none;
  background: linear-gradient(#fff, #f5f5f5);
}
.brand { width: 29px; display: flex; justify-content: center; }
.sep { width: 1px; height: 28px; margin: 0 3px 0 2px; background: #d4d4d4; flex: none; }
.tb { width: 28px; display: flex; justify-content: center; flex: none; }
.dd { width: 12px; display: flex; justify-content: center; color: #444; flex: none; }
.dd svg { width: 6px; height: 4px; }
.title { flex: 1; text-align: center; white-space: nowrap; }
.win { width: 44px; display: flex; justify-content: center; flex: none; }

/* Ribbon tabs */
.tabs {
  display: grid;
  grid-template-columns: 56px 51px 41px 68px 52px 45px 60px 56px 45px 52px 72px 40px 98px 51px 55px 1fr;
  height: 30px;
  flex: none;
  background: #e0e0e0;
  border-bottom: 1px solid #cfcfcf;
}
.tabs > button { border-right: 1px solid #c6c6c6; white-space: nowrap; }
.tabs .file { background: #c0504d; color: #fff; border: 0; }
.tabs .current {
  background: #f7f7f7;
  color: #1a4a86;
  margin-bottom: -1px;
  border-right: 1px solid #bbb;
  border-top: 1px solid #ccc;
  border-radius: 4px 4px 0 0;
}
.tabs .context { background: #e4dcb9; border-color: #f0dc8f; }
.tabtools { display: flex; align-items: center; padding-left: 4px; gap: 4px; }
.tabtools .fold { margin: 0 6px 0 auto; }

/* Ribbon */
.ribbon { display: flex; height: 102px; flex: none; background: #f7f7f7; }
.group { border-right: 1px solid #d2d2d2; margin: 2px 0 3px; display: flex; flex-direction: column; }
.group h2 { text-align: center; color: #777; height: 14px; line-height: 16px; font-size: 11px; }
.g-tools { width: 112px; padding-left: 4px; }
.g-fields { width: 371px; }
.g-data { width: 240px; }
.g-js { flex: 1; }
.cmds { flex: none; height: 84px; display: flex; flex-direction: column; }
.cmds.row, .cmds.fields { flex-direction: row; }
.cmd {
  display: flex;
  align-items: center;
  gap: 4px;
  height: 28px;
  white-space: nowrap;
}
.cmd > svg:first-child { min-width: 22px; }
.cmd .arr { margin-left: 3px; }
.cmdcol { display: flex; flex-direction: column; align-items: flex-start; }
.off { color: #888; }
.iconcol { width: 36px; display: grid; grid-template-rows: repeat(3, 28px); padding-left: 4px; }
.iconcol button { width: 28px; display: flex; align-items: center; justify-content: center; }
.iconcol .on, .hot {
  border: 1px solid #9c7f35;
  border-radius: 3px;
  background: linear-gradient(#e8cf83, #fbdf88 40%, #fff3c0);
}
.vline { width: 1px; background: #ccc; margin: 2px 3px 0; }
.vline.short { margin: 28px 2px 28px 0; }
.icongrid { display: grid; grid-template: repeat(3, 28px) / repeat(3, 28px); }
.icongrid button { display: flex; align-items: center; justify-content: center; }
.oktext { font-size: 8px; text-anchor: middle; fill: #444; }
.hot { padding: 0 2px; width: 127px; }
.hot .arr { margin-left: auto; }
.lonely { margin-left: auto; margin-right: 11px; align-self: flex-start; padding-top: 3px; }
.fields .cmdcol { width: 206px; }
.big { display: flex; flex-direction: column; align-items: center; width: 52px; line-height: 13px; }
.big svg { height: 46px; margin: 4px 0 5px; }
.big.console { width: 62px; }
.g-data .row { padding-left: 4px; }
.g-data .cmdcol { padding-left: 2px; }

/* Work area */
.desk {
  flex: 1;
  min-height: 0;
  display: flex;
  border-top: 1px solid #333;
  background: #808080;
}
.left { flex: 1; min-width: 0; display: flex; flex-direction: column; background: #8a8a8a; }
.doctabs { display: flex; height: 23px; flex: none; background: linear-gradient(#4a4a4a, #666); align-items: stretch; }
.doctab {
  width: 109px;
  display: flex;
  align-items: center;
  padding: 0 4px 0 7px;
  gap: 3px;
  background: linear-gradient(#fff2c8, #fde08a);
  white-space: nowrap;
}
.doctab b { color: #2a4f9a; }
.doctab svg { margin: 0 0 6px auto; }
.plus { width: 20px; display: flex; align-items: center; justify-content: center; border-right: 1px solid #444; }
.shut { width: 26px; margin-left: auto; display: flex; align-items: center; justify-content: center; border-left: 1px solid #777; }
.frame {
  flex: 1;
  min-height: 0;
  display: flex;
  padding: 2px 1px 1px;
  border: 2px solid;
  border-image: linear-gradient(#fde08a 80%, #f5f5f5 86%) 2;
}
.splitter { width: 9px; flex: none; display: flex; align-items: center; justify-content: center; background: #888; }
.splitter b {
  width: 5px;
  height: 60px;
  border: 1px solid #ddd;
  border-radius: 2px;
  background: #f5f5f5;
  display: flex;
  align-items: center;
}
.splitter b::after { content: ""; border: 3px solid transparent; border-left-width: 0; border-right-color: #222; }
.splitter .fwd::after { border-left: 3px solid #222; border-right-width: 0; }
.right-split { width: 6px; }

/* Thumbnails pane */
.thumbs {
  width: 158px;
  flex: none;
  display: flex;
  flex-direction: column;
  padding: 0 3px 3px;
  background: #f5f5f5;
}
.thumbs header, .props header { display: flex; align-items: center; justify-content: space-between; height: 22px; flex: none; }
.thumbs header { padding: 0 4px 0 3px; }
.thumbbar {
  display: flex;
  align-items: center;
  height: 32px;
  flex: none;
  gap: 3px;
  border: 1px solid #c8c8c8;
  background: #fafafa;
}
.thumbbar > i { width: 1px; height: 25px; background: #ccc; margin: 0 2px; }
.thumbbar > .arr { margin: 0 2px; }
.thumbbar button + button { margin-left: 3px; }
.endmark { align-self: flex-end; margin: 0 1px 2px auto; }
.thumbbar .endmark { margin-bottom: 1px; }
.thumblist {
  flex: 1;
  min-height: 0;
  position: relative;
  border: 1px solid #aaa;
  background: #fff;
}
.thumblist figure {
  width: 132px;
  height: 126px;
  margin-bottom: 2px;
  display: flex;
  flex-direction: column;
  align-items: center;
  padding-top: 2px;
  border: 2px solid transparent;
}
.thumblist figure svg { outline: 1px solid #444; box-shadow: 1px 1px 4px #555; }
.thumblist .picked { border-color: #f3cd74; background: linear-gradient(#fafafa, #d4d4d4 103px, #fde08a 103px); border-radius: 2px; }
.thumblist figcaption { margin-top: 5px; }
.watermark { position: absolute; right: 8px; bottom: 10px; }

/* Document pane */
.docs {
  flex: 1;
  min-width: 0;
  display: grid;
  grid-template: minmax(0, 1fr) 15px 30px / minmax(0, 1fr) 15px;
  padding: 0 2px 2px 0;
  border: 2px solid;
  border-image: linear-gradient(#fde08a 80%, #f5f5f5 86%) 2;
  background: #999;
}
.viewport { overflow: hidden; background: #5a5a5a; padding-left: 4px; min-height: 0; }
.vbar, .hbar { display: flex; background: linear-gradient(90deg, #aaa, #ccc); border: 1px solid #888; }
.vbar { flex-direction: column; justify-content: space-between; }
.hbar { background: linear-gradient(#aaa, #ccc); justify-content: flex-start; }
.vbar .end, .hbar .end { flex: none; display: flex; align-items: center; justify-content: center; background: #f8f8f8; border: 1px solid #999; }
.vbar .end { height: 14px; }
.hbar .end { width: 14px; }
.hbar .end:last-child { margin-left: auto; }
.thumb { display: flex; align-items: center; justify-content: center; background: linear-gradient(90deg, #fff, #e8e8e8); border: 1px solid #aaa; }
.docs .vbar .thumb { height: 27%; margin-bottom: 254px; }
.hbar .thumb { width: 290px; background: linear-gradient(#fff, #eee); margin-left: 1px; }
.thumb em { width: 7px; height: 5px; background: repeating-linear-gradient(#777 0 1px, transparent 1px 2px); }
.hbar .thumb em { width: 5px; height: 7px; background: repeating-linear-gradient(90deg, #777 0 1px, transparent 1px 2px); }
.status { grid-column: 1 / 3; display: flex; align-items: center; background: #f8f8f8; }
.status .more { width: 13px; display: flex; justify-content: center; }
.status .m1 { margin-left: 12px; }
.status .m2 { margin-left: 14px; }
.status .m3 { margin-left: 12px; }
.status .m4 { margin-left: 11px; }
.nav { width: 28px; display: flex; justify-content: center; flex: none; }
.pageno, .zoom {
  display: flex;
  align-items: center;
  height: 22px;
  border: 1px solid #999;
  border-radius: 3px;
  background: #fff;
  overflow: hidden;
}
.pageno { flex: 1; min-width: 60px; margin: 0 1px; padding-right: 3px; }
.pageno input { flex: 1; min-width: 0; border: 0; padding: 0; text-align: right; font: inherit; background: none; }
.pageno small { font-size: 9px; color: #555; vertical-align: 2px; margin-left: 1px; }
.zoom { width: 82px; margin: 0 2px; padding-right: 4px; }
.zoom select { flex: 1; appearance: none; border: 0; background: none; font: inherit; color: #111; padding: 0 3px; }

/* Printed page */
.sheet {
  width: 620px;
  min-height: 700px;
  background: #fff;
  padding-left: 35px;
  font: 7px/8px "Liberation Sans", Arial, sans-serif;
  color: #222;
}
.sheet h3, .sheet b { font-weight: bold; }
.sheet span, .sheet b { white-space: nowrap; }
.card { background: #f1f1f1; }
.upper { display: flex; gap: 6px; height: 160px; margin-bottom: 4px; }
.upmain {
  display: grid;
  grid-template: 57px 28px 61px / 251px 100px;
  row-gap: 4px;
  column-gap: 3px;
  padding-top: 6px;
}
.photo {
  grid-area: 1 / 2 / 3 / 3;
  margin: -6px 0 13px;
  border: solid #333;
  border-width: 0 1px 1px;
  background: #fff;
  padding-top: 8px;
  text-align: center;
  font-size: 8px;
  line-height: 10px;
}
.cat { padding: 2px 4px 0 5px; }
.line { display: flex; align-items: center; height: 18px; }
.cat h3 { height: 14px; }
.opts1 { padding-left: 15px; gap: 3px; }
.opts1 .chk + span { width: 60px; }
.opts1 .oth { width: 17px; }
.fam { grid-area: 2 / 1; display: flex; align-items: center; justify-content: space-between; padding: 0 5px; }
.num { width: 43px; }
.lang { grid-area: 3 / 1 / 4 / 3; padding: 2px 4px 0 5px; }
.lang h3 { height: 10px; }
.opts2 { padding-left: 14px; gap: 2px; }
.opts2 > span:first-child { width: 66px; }
.opts2 .chk + span { width: 42px; }
.opts2 .chk:nth-child(4) + span { width: 37px; }
.opts2 > span:nth-child(6) { width: 19px; }
.dash { height: 9px; background: repeating-linear-gradient(90deg, #bbb 0 18px, transparent 18px 23px) 0 4px / 100% 1px no-repeat; }
.official { flex: 1; margin-top: 6px; border: 1px solid #333; background: #fff; padding: 2px 0 0 31px; font-size: 8px; }
.chk { width: 13px; height: 13px; border: 2px solid #000; background: #2d2d35; flex: none; }
.upper .chk { background: linear-gradient(#fff, #fff) 5px 7px / 3px 1px no-repeat #2d2d35; }

.field {
  height: 19px;
  border: 2px solid #000;
  background: #d9dfff;
  overflow: hidden;
  display: flex;
  justify-content: center;
  flex: none;
}
.field span {
  height: 15px;
  overflow: hidden;
  padding: 0 2px;
  background: #2d2d35;
  color: #fff;
  font: 12px/20px "Open Sans", "Noto Sans", sans-serif;
}
.field.grow { flex: 1; }
.field.full { background: #2d2d35; justify-content: flex-start; }
.blue span { background: #2b8ae0; }

.lower { display: flex; gap: 23px; }
.person { width: 252px; height: 340px; flex: none; padding: 0 7px 0 5px; }
.q { display: flex; align-items: center; height: 21px; }
.q > :first-child { width: 14px; flex: none; }
.q.short { height: 14px; }
.person .short { height: 16px; }
.q.first { height: 14px; }
.q.family { height: 19px; }
.q.sex { height: 18px; }
.q.tall { height: 22px; }
.q.title12 { height: 16px; }
.w47 { width: 47px; flex: none; }
.w70 { width: 70px; flex: none; }
.w36 { width: 36px; flex: none; }
.w30 { width: 30px; flex: none; }
.w88 { width: 88px; flex: none; }
.q .chk + span { margin-left: 2px; }
.picked-field { flex: 1; position: relative; }
.picked-field .field {
  border: 3px solid #0d5ea8;
  border-image: repeating-linear-gradient(135deg, #0b4f90 0 1px, #3f9be6 1px 3px) 3;
}
.picked-field span { height: 13px; line-height: 18px; }
.knob {
  position: absolute;
  width: 11px;
  height: 11px;
  border: 1px solid #222;
  border-radius: 2px;
  background: linear-gradient(135deg, #fff, #ffd97a);
}
.tl { left: -5px; top: -5px; }
.tr { right: -5px; top: -5px; }
.bl { left: -5px; bottom: -5px; }
.br { right: -5px; bottom: -5px; }
.tm { left: calc(50% - 4px); top: -5px; width: 9px; height: 9px; }
.bm { left: calc(50% - 4px); bottom: -5px; width: 9px; height: 9px; }
.date {
  width: 83px;
  display: grid;
  grid-template: 6px 8px / 20px 21px 1fr;
  border: 1px solid #000;
  border-bottom: 2px dashed #000;
  background: #fff;
  font-size: 5px;
  line-height: 6px;
  text-align: center;
}
.date i { background: #2d2d35; border: 1px solid #000; }
.cmf { width: 60px; }
.unit { border: 1px solid #333; border-left: 0; background: #fff; height: 18px; line-height: 16px; width: 12px; }
.feet { flex: 1; margin-left: 1px; height: 19px; border: 1px solid #333; background: #fff; display: flex; align-items: center; padding-left: 15px; gap: 1px; }
.feet .field { width: 18px; }
.feet .wide { width: 25px; }
.marital { display: grid; grid-template: repeat(2, 18px) / repeat(4, 13px 45px); align-items: center; padding-left: 13px; }
.marital span { padding-left: 2px; }
.union { display: flex; justify-content: space-between; padding: 3px 0 0 15px; line-height: 8px; }
.union .date { margin-top: 1px; align-self: flex-start; }

.study { flex: 1; height: 340px; padding-left: 4px; min-width: 0; }
.study p { height: 12px; line-height: 12px; padding-left: 16px; white-space: nowrap; }
.study .q > :first-child { width: 15px; }
.levels { display: grid; grid-template: repeat(4, 13px) / 16px 1fr; align-items: center; padding: 0 0 0 14px; margin: 3px 0 0; }
.levels .chk { background: linear-gradient(#fff, #fff) 4px 5px / 1px 4px no-repeat #2d2d35; }
.occ { width: 180px; }
.occ span { margin-left: 4px; }
.study .occ { justify-content: flex-start; }
.stack { padding-left: 15px; }
.stack .field { width: 216px; height: 18px; justify-content: flex-start; }
.stack .field span { margin-left: 61px; width: 200px; height: 14px; }
.q.gap { margin-top: 2px; }
.cc { padding-left: 83px; height: 8px; font-size: 6px; }
.home { display: flex; align-items: center; padding-left: 43px; gap: 6px; }
.phone { width: 160px; height: 22px; display: flex; align-items: center; border: 1px solid #222; background: #fff; padding-left: 9px; font-size: 9px; }
.phone .field { width: 27px; height: 22px; }
.phone .field span { height: 18px; }

/* Properties pane */
.props {
  width: 291px;
  flex: none;
  display: flex;
  flex-direction: column;
  margin-right: 2px;
  margin-bottom: 2px;
  border: 2px solid;
  border-top: 0;
  border-image: linear-gradient(#f5f5f5 82%, #fde08a 86%) 2;
  background: #f5f5f5;
}
.props header { padding: 0 4px 0 3px; height: 23px; }
.propbody { flex: 1; min-height: 0; display: flex; }
.tablewrap { flex: 1; min-width: 0; overflow: hidden; border: 1px solid #aaa; border-width: 1px 0 1px 1px; background: #fff; }
table { border-collapse: separate; border-spacing: 0; width: 100%; table-layout: fixed; }
.c-name { width: 101px; }
.c-act { width: 20px; }
th, td { height: 23px; padding: 0; font-weight: normal; text-align: right; border-bottom: 1px solid #e2e2e2; white-space: nowrap; }
th { padding-right: 3px; color: #777; border-right: 1px solid #d8d8d8; }
td { text-align: left; padding-left: 2px; color: #000; }
.stub th, .stub td { height: 6px; }
.sec th { height: 21px; text-align: left; font-weight: bold; background: linear-gradient(#fff, #f0f0f0); border-right: 0; }
.sec svg { display: inline-block; margin: 0 4px 3px 3px; vertical-align: middle; }
.dim td { color: #888; }
td.act { padding: 0; border-left: 1px solid #e2e2e2; }
.swatch { display: inline-block; width: 19px; height: 19px; margin-right: 3px; background: #000; border-radius: 2px; vertical-align: middle; }
.sel th { background: linear-gradient(#b9dbf8, #7fb7ea); color: #555; }
.sel th, .sel td { border-top: 1px solid #2f6db5; border-bottom-color: #2f6db5; }
.sel td { font-weight: bold; }
.sel .act { border-left: 0; padding-left: 4px; }
.props .vbar { width: 15px; }
.props .vbar .thumb { height: 229px; margin-top: 37px; }
```
